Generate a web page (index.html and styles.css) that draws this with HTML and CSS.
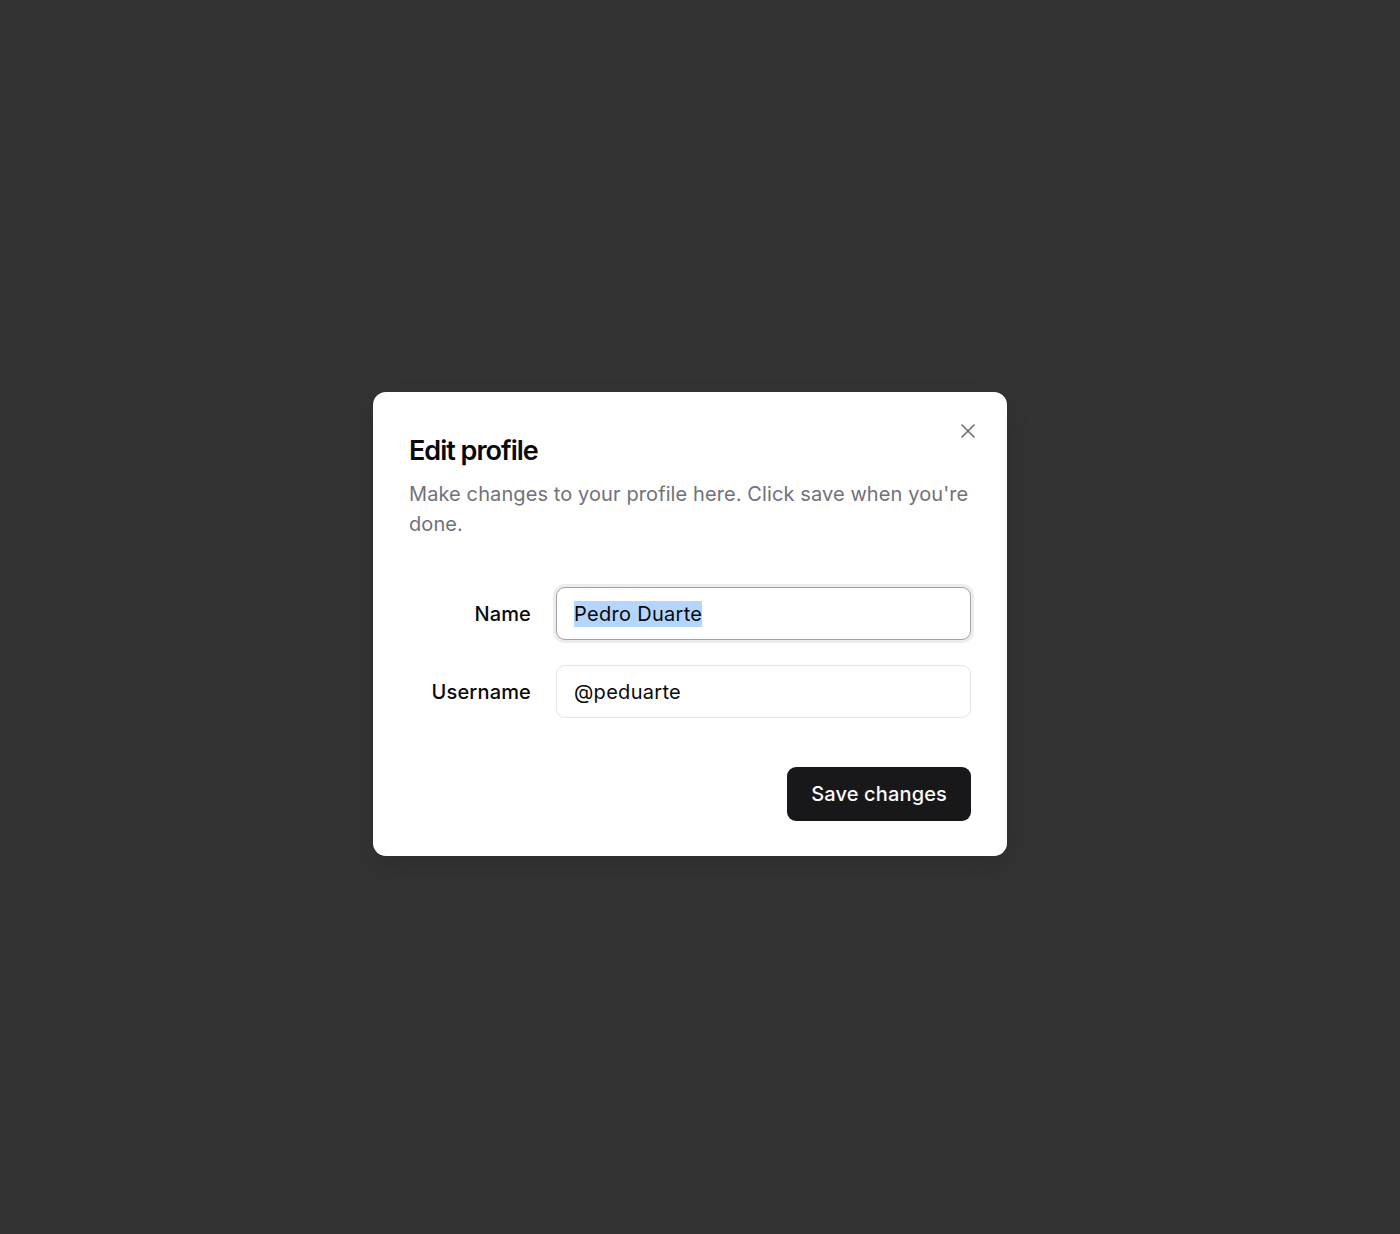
FILE: index.html
```html
<!DOCTYPE html>
<html lang="en">
<head>
<meta charset="utf-8">
<title>Edit profile</title>
<link rel="stylesheet" href="styles.css">
</head>
<body>
<div class="overlay">
  <div class="dialog" role="dialog" aria-labelledby="dlg-title">
    <button class="close" aria-label="Close">
      <svg width="24" height="24" viewBox="0 0 24 24" fill="none" stroke="currentColor" stroke-width="1.6" stroke-linecap="round" stroke-linejoin="round"><path d="M18 6 6 18"/><path d="m6 6 12 12"/></svg>
    </button>
    <div class="header">
      <h2 class="title" id="dlg-title">Edit profile</h2>
      <p class="desc">Make changes to your profile here. Click save when you're done.</p>
    </div>
    <div class="form">
      <div class="row">
        <label class="label">Name</label>
        <div class="field focused"><span class="sel">Pedro Duarte</span></div>
      </div>
      <div class="row">
        <label class="label">Username</label>
        <div class="field">@peduarte</div>
      </div>
    </div>
    <div class="footer">
      <button class="btn">Save changes</button>
    </div>
  </div>
</div>
</body>
</html>
```
FILE: styles.css
```css
* { box-sizing: border-box; }
html, body { margin: 0; padding: 0; }
body {
  background: #333333;
  font-family: Inter, "Noto Sans", "Liberation Sans", sans-serif;
  letter-spacing: 0.15px;
  width: 1400px;
  height: 1234px;
}
.overlay {
  padding: 392px 0 0 373px;
  display: flex;
  align-items: flex-start;
}
.dialog {
  position: relative;
  width: 634px;
  height: 464px;
  background: #ffffff;
  border-radius: 13px;
  padding: 36px;
  box-shadow: 0 10px 25px rgba(0,0,0,0.12);
}
.close {
  position: absolute;
  top: 27px;
  right: 27px;
  width: 24px;
  height: 24px;
  padding: 0;
  border: 0;
  background: none;
  color: #6b6b70;
  display: flex;
  align-items: center;
  justify-content: center;
}
.header { display: flex; flex-direction: column; }
.title {
  margin: 3px 0 0;
  font-size: 27px;
  line-height: 39px;
  font-weight: 600;
  letter-spacing: -1px;
  color: #09090b;
}
.desc {
  margin: 9px 0 0;
  font-size: 20px;
  line-height: 30px;
  letter-spacing: 0.1px;
  color: #71717a;
}
.form {
  display: flex;
  flex-direction: column;
  gap: 25px;
  padding-top: 48px;
}
.row {
  display: grid;
  grid-template-columns: 122px 1fr;
  column-gap: 25px;
  align-items: center;
}
.label {
  text-align: right;
  font-size: 20px;
  font-weight: 500;
  color: #09090b;
}
.field {
  height: 53px;
  border: 1px solid #e4e4e7;
  border-radius: 9px;
  padding: 0 17px;
  display: flex;
  align-items: center;
  font-size: 20px;
  letter-spacing: 0.3px;
  color: #09090b;
  background: #fff;
}
.field.focused {
  border-color: #a1a1aa;
  box-shadow: 0 0 0 3px #ececee;
}
.sel { background: #b4d5fe; line-height: 26px; }
.footer {
  display: flex;
  justify-content: flex-end;
  padding-top: 49px;
}
.btn {
  height: 54px;
  padding: 0 24px;
  border: 0;
  border-radius: 9px;
  background: #18181b;
  color: #fafafa;
  font-family: inherit;
  font-size: 20px;
  font-weight: 500;
  letter-spacing: 0.15px;
}
```
